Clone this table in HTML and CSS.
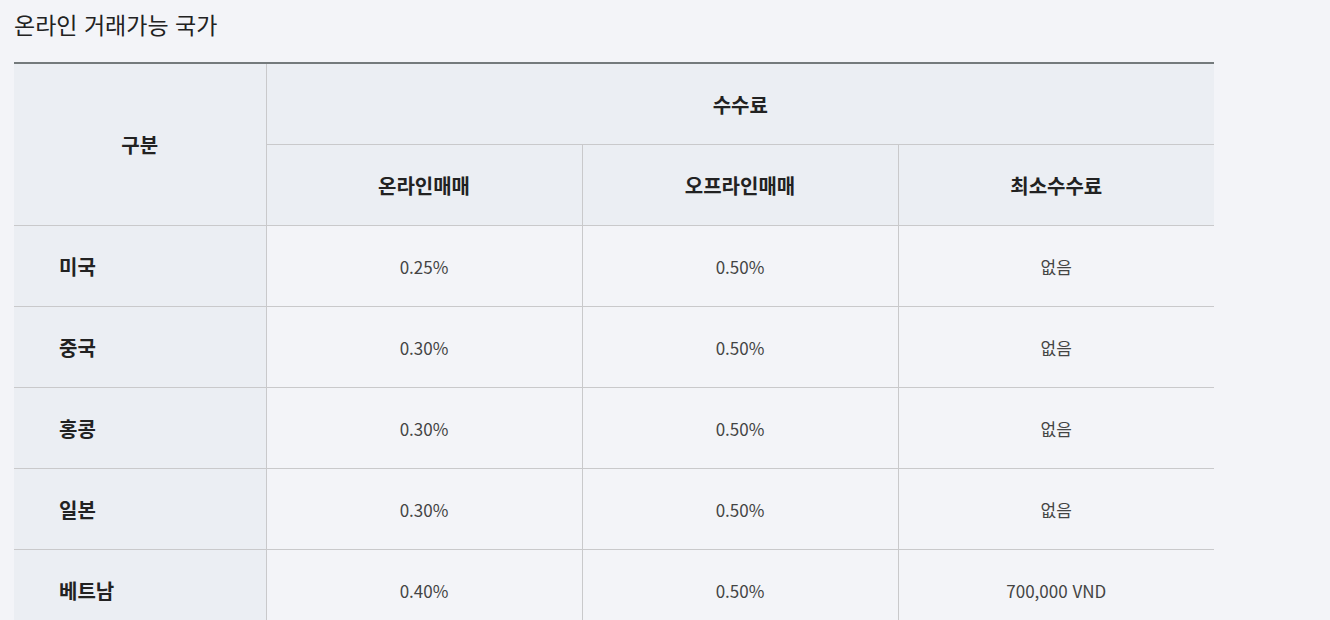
FILE: index.html
```html
<!DOCTYPE html>
<html lang="ko">
<head>
<meta charset="utf-8">
<link rel="stylesheet" href="styles.css">
</head>
<body>
<div class="page">
  <h2 class="title">온라인 거래가능 국가</h2>
  <table class="fee">
    <colgroup>
      <col class="c1"><col class="c2"><col class="c2"><col class="c2">
    </colgroup>
    <thead>
      <tr><th rowspan="2">구분</th><th colspan="3">수수료</th></tr>
      <tr><th>온라인매매</th><th>오프라인매매</th><th>최소수수료</th></tr>
    </thead>
    <tbody>
      <tr><th class="rowh">미국</th><td>0.25%</td><td>0.50%</td><td>없음</td></tr>
      <tr><th class="rowh">중국</th><td>0.30%</td><td>0.50%</td><td>없음</td></tr>
      <tr><th class="rowh">홍콩</th><td>0.30%</td><td>0.50%</td><td>없음</td></tr>
      <tr><th class="rowh">일본</th><td>0.30%</td><td>0.50%</td><td>없음</td></tr>
      <tr><th class="rowh">베트남</th><td>0.40%</td><td>0.50%</td><td>700,000 VND</td></tr>
    </tbody>
  </table>
</div>
</body>
</html>
```
FILE: styles.css
```css
html, body {
  margin: 0;
  padding: 0;
  background: #f3f4f8;
}
body {
  font-family: "Noto Sans CJK KR", "Noto Sans", sans-serif;
  color: #222;
}
.page {
  padding: 0 14px;
}
.title {
  margin: 0;
  padding-top: 8px;
  height: 54px;
  font-size: 23px;
  font-weight: 400;
  line-height: 32px;
  color: #222;
}
.fee {
  width: 1200px;
  border-collapse: collapse;
  border-top: 2px solid #747a7c;
  table-layout: fixed;
}
.c1 { width: 252px; }
.c2 { width: 316px; }
.fee th, .fee td {
  height: 80px;
  padding: 0;
  border: 1px solid #c9c9cb;
  text-align: center;
  vertical-align: middle;
}
.fee tr > :first-child { border-left: none; }
.fee tr > :last-child { border-right: none; }
.fee thead th {
  background: #ebeef3;
  font-size: 20px;
  font-weight: 700;
  color: #222;
}
.fee tbody th.rowh {
  background: #ebeef3;
  text-align: left;
  padding-left: 45px;
  font-size: 20px;
  font-weight: 700;
  color: #222;
}
.fee tbody td {
  background: #f3f4f8;
  font-size: 17px;
  color: #444;
}
.fee tbody tr:last-child > * { border-bottom: none; }
```
